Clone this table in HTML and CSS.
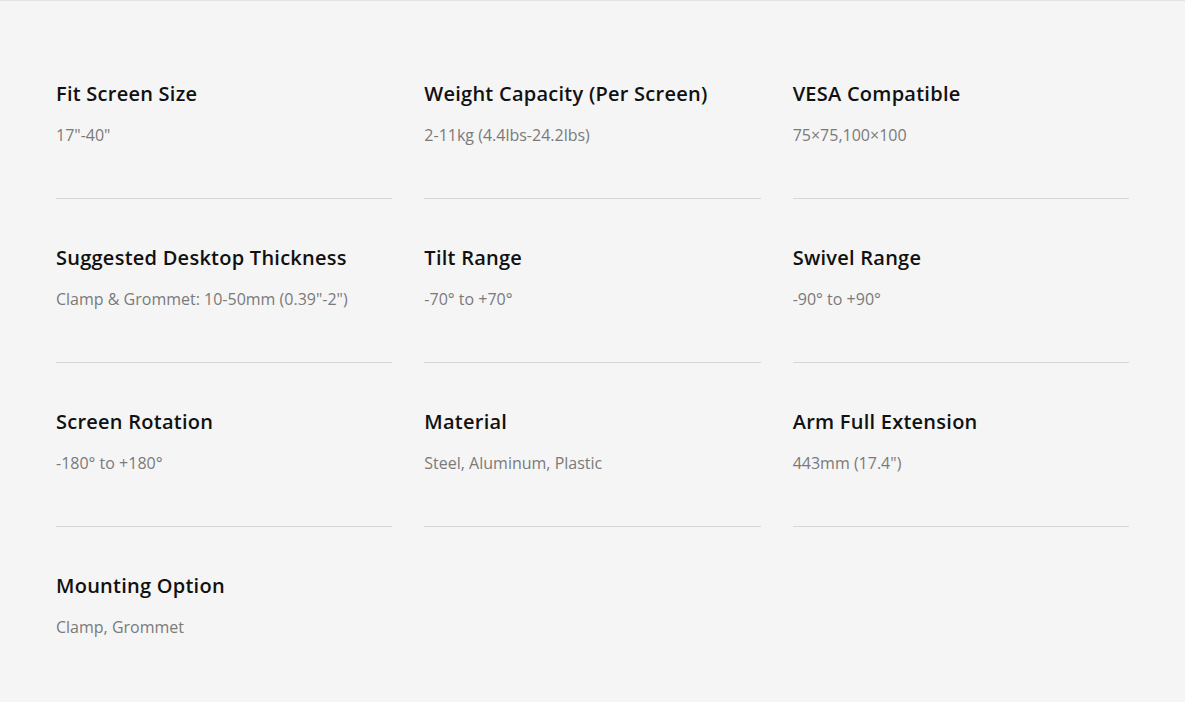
FILE: index.html
```html
<!DOCTYPE html>
<html lang="en">
<head>
  <meta charset="UTF-8">
  <meta name="viewport" content="width=device-width, initial-scale=1.0">
  <title>Specifications</title>
  <link rel="stylesheet" href="styles.css">
</head>
<body>
  <section class="specs">
    <div class="spec">
      <h3 class="spec-title">Fit Screen Size</h3>
      <p class="spec-value">17"-40"</p>
    </div>
    <div class="spec">
      <h3 class="spec-title">Weight Capacity (Per Screen)</h3>
      <p class="spec-value">2-11kg (4.4lbs-24.2lbs)</p>
    </div>
    <div class="spec">
      <h3 class="spec-title">VESA Compatible</h3>
      <p class="spec-value">75×75,100×100</p>
    </div>
    <div class="spec">
      <h3 class="spec-title">Suggested Desktop Thickness</h3>
      <p class="spec-value">Clamp &amp; Grommet: 10-50mm (0.39"-2")</p>
    </div>
    <div class="spec">
      <h3 class="spec-title">Tilt Range</h3>
      <p class="spec-value">-70° to +70°</p>
    </div>
    <div class="spec">
      <h3 class="spec-title">Swivel Range</h3>
      <p class="spec-value">-90° to +90°</p>
    </div>
    <div class="spec">
      <h3 class="spec-title">Screen Rotation</h3>
      <p class="spec-value">-180° to +180°</p>
    </div>
    <div class="spec">
      <h3 class="spec-title">Material</h3>
      <p class="spec-value">Steel, Aluminum, Plastic</p>
    </div>
    <div class="spec">
      <h3 class="spec-title">Arm Full Extension</h3>
      <p class="spec-value">443mm (17.4")</p>
    </div>
    <div class="spec spec-last">
      <h3 class="spec-title">Mounting Option</h3>
      <p class="spec-value">Clamp, Grommet</p>
    </div>
  </section>
</body>
</html>
```

FILE: styles.css
```css
body {
  margin: 0;
  background-color: #f5f5f5;
  border-top: 1px solid #e3e3e3;
  font-family: "Open Sans", "Noto Sans", sans-serif;
  color: #111;
}

.specs {
  display: grid;
  grid-template-columns: repeat(3, 1fr);
  column-gap: 32px;
  row-gap: 45px;
  padding: 79px 56px 40px;
}

.spec {
  height: 118px;
  border-bottom: 1px solid #d6d6d6;
}

.spec-last {
  border-bottom: none;
}

.spec-title {
  margin: 0;
  font-size: 20px;
  font-weight: 600;
  line-height: 28px;
  letter-spacing: 0.25px;
  color: #111;
}

.spec-value {
  margin: 15px 0 0;
  font-size: 16px;
  line-height: 24px;
  color: #7a7a7a;
}
```
